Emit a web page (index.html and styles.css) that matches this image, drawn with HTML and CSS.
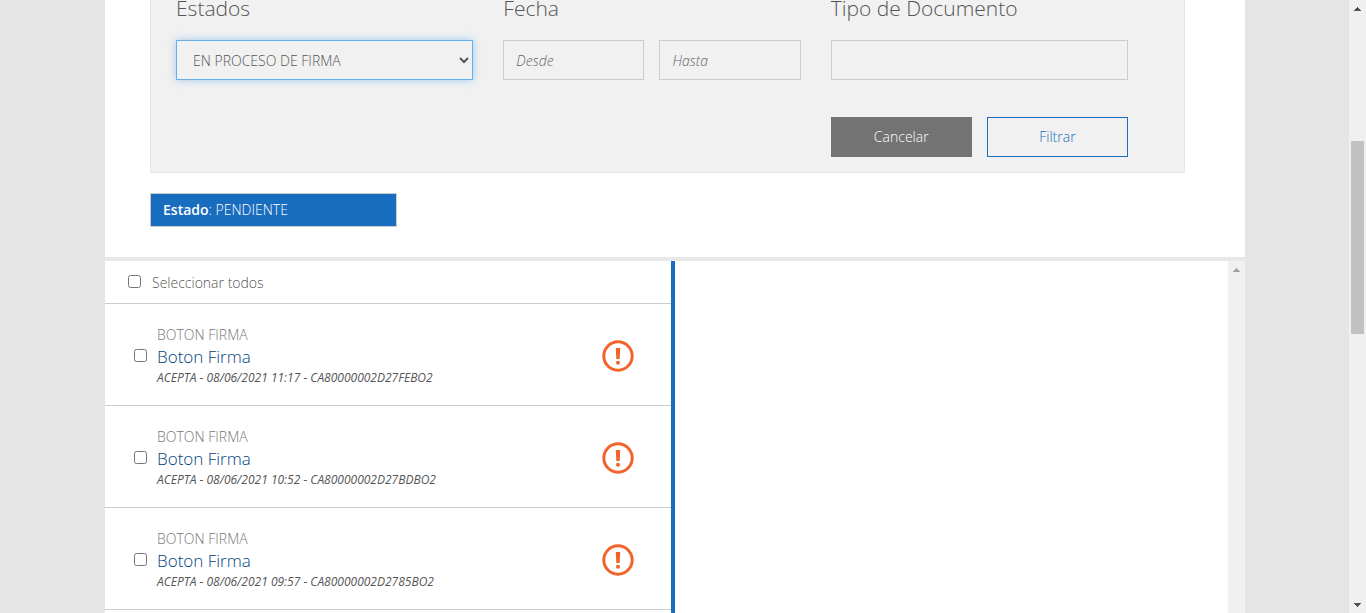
FILE: index.html
```html
<!DOCTYPE html>
<html lang="es">
<head>
<meta charset="utf-8">
<meta name="viewport" content="width=device-width, initial-scale=1">
<title>Documentos</title>
<link rel="stylesheet" href="styles.css">
</head>
<body>
<div class="page">
  <main class="content">
    <section class="top">
      <form class="filters">
        <div class="field">
          <label class="field-title" for="estado">Estados</label>
          <select class="control select" id="estado"><option>EN PROCESO DE FIRMA</option></select>
        </div>
        <div class="field">
          <label class="field-title" for="desde">Fecha</label>
          <div class="pair">
            <input class="control" id="desde" type="text" placeholder="Desde">
            <input class="control" type="text" placeholder="Hasta" aria-label="Hasta">
          </div>
        </div>
        <div class="field">
          <label class="field-title" for="tipo">Tipo de Documento</label>
          <input class="control" id="tipo" type="text">
        </div>
        <div class="pair actions">
          <button class="button button-cancel" type="button">Cancelar</button>
          <button class="button button-filter" type="button">Filtrar</button>
        </div>
      </form>
      <div class="status"><strong>Estado</strong>: PENDIENTE</div>
    </section>
    <section class="documents">
      <div class="list">
        <label class="select-all"><input class="check" type="checkbox"><span>Seleccionar todos</span></label>
        <article class="item">
          <input class="check" type="checkbox" id="doc1">
          <label class="info" for="doc1"><span class="kind">BOTON FIRMA</span><span class="name">Boton Firma</span><span class="meta">ACEPTA - 08/06/2021 11:17 - CA80000002D27FEBO2</span></label>
          <svg class="alert" viewBox="0 0 32 32" aria-hidden="true"><circle cx="16" cy="16" r="14.2"/><path d="M13.8 8h4.4l-.5 11h-3.4z"/><circle class="dot" cx="16" cy="22.8" r="2"/></svg>
        </article>
        <article class="item">
          <input class="check" type="checkbox" id="doc2">
          <label class="info" for="doc2"><span class="kind">BOTON FIRMA</span><span class="name">Boton Firma</span><span class="meta">ACEPTA - 08/06/2021 10:52 - CA80000002D27BDBO2</span></label>
          <svg class="alert" viewBox="0 0 32 32" aria-hidden="true"><circle cx="16" cy="16" r="14.2"/><path d="M13.8 8h4.4l-.5 11h-3.4z"/><circle class="dot" cx="16" cy="22.8" r="2"/></svg>
        </article>
        <article class="item">
          <input class="check" type="checkbox" id="doc3">
          <label class="info" for="doc3"><span class="kind">BOTON FIRMA</span><span class="name">Boton Firma</span><span class="meta">ACEPTA - 08/06/2021 09:57 - CA80000002D2785BO2</span></label>
          <svg class="alert" viewBox="0 0 32 32" aria-hidden="true"><circle cx="16" cy="16" r="14.2"/><path d="M13.8 8h4.4l-.5 11h-3.4z"/><circle class="dot" cx="16" cy="22.8" r="2"/></svg>
        </article>
      </div>
      <div class="preview"></div>
      <div class="scrollbar scrollbar-disabled" aria-hidden="true">
        <svg class="arrow" viewBox="0 0 7 4" shape-rendering="crispEdges"><path d="M3 0h1v1h1v1h1v1h1v1H0V3h1V2h1V1h1z"/></svg>
      </div>
    </section>
  </main>
</div>
<div class="scrollbar" aria-hidden="true">
  <svg class="arrow" viewBox="0 0 7 4" shape-rendering="crispEdges"><path d="M3 0h1v1h1v1h1v1h1v1H0V3h1V2h1V1h1z"/></svg>
  <div class="track"><div class="thumb"></div></div>
  <svg class="arrow" viewBox="0 0 7 4" shape-rendering="crispEdges"><path d="M0 0h7v1H6v1H5v1H4v1H3V3H2V2H1V1H0z"/></svg>
</div>
</body>
</html>
```
FILE: styles.css
```css
* {
  box-sizing: border-box;
}

body {
  margin: 0;
  height: 100vh;
  display: flex;
  overflow: hidden;
  font: 300 14px/20px "Open Sans", sans-serif;
  color: #555;
  background: #e5e5e5;
}

.page {
  flex: 1;
  display: flex;
  padding: 0 104px 0 105px;
}

.content {
  flex: 1;
  display: flex;
  flex-direction: column;
  min-width: 0;
  background: #fff;
}

.top {
  padding: 0 60px 30px 45px;
  border-bottom: 4px solid #e8e8e8;
}

.filters {
  display: grid;
  grid-template-columns: repeat(3, minmax(0, 1fr));
  gap: 37px 30px;
  padding: 0 56px 15px 25px;
  background: #f1f1f1;
  border: 1px solid #e5e5e5;
  border-top: 0;
}

.field-title {
  display: block;
  margin-bottom: 24px;
  font-size: 21px;
  line-height: 16px;
}

.pair {
  display: grid;
  grid-template-columns: repeat(2, minmax(0, 1fr));
  gap: 15px;
}

.actions {
  grid-column: 3;
}

.control {
  display: block;
  width: 100%;
  height: 40px;
  padding: 0 12px;
  font: inherit;
  color: #555;
  background: #f1f1f1;
  border: 1px solid #ccc;
  border-radius: 0;
  outline: 0;
}

.control::placeholder {
  color: #666;
  font-style: italic;
}

.select {
  border-color: #66afe9;
  box-shadow: 0 0 8px rgba(102, 175, 233, 0.6);
}

.button {
  height: 40px;
  padding: 0;
  font: inherit;
  border: 1px solid;
}

.button-cancel {
  color: #fff;
  background: #737373;
  border-color: #737373;
}

.button-filter {
  color: #196dbf;
  background: transparent;
  border-color: #196dbf;
}

.status {
  width: 247px;
  margin-top: 20px;
  padding: 6px 12px;
  color: #fff;
  background: #196dbf;
  border: 1px solid #ccc;
}

.status strong {
  font-weight: 600;
}

.documents {
  flex: 1;
  display: flex;
  min-height: 0;
}

.list {
  flex: 1;
  overflow: hidden;
  border-right: 4px solid #196dbf;
}

.select-all {
  display: flex;
  align-items: baseline;
  gap: 11px;
  height: 43px;
  padding: 12px 0 0 23px;
  border-bottom: 1px solid #ccc;
}

.check {
  flex: none;
  width: 13px;
  height: 13px;
  margin: 0;
}

.item {
  display: flex;
  align-items: center;
  gap: 10px;
  height: 102px;
  padding: 2px 37px 0 29px;
  border-bottom: 1px solid #ccc;
}

.info {
  flex: 1;
  display: flex;
  flex-direction: column;
}

.kind {
  color: #777;
}

.name {
  font-size: 17px;
  line-height: 24px;
  color: #00437f;
}

.meta {
  font-size: 12px;
  line-height: 18px;
  font-style: italic;
  font-weight: 400;
}

.alert {
  width: 32px;
  height: 32px;
  fill: none;
  stroke: #f2622b;
  stroke-width: 3;
}

.alert path,
.alert .dot {
  fill: #f2622b;
  stroke: none;
}

.preview {
  flex: 0 0 553px;
}

.scrollbar {
  flex: none;
  display: flex;
  flex-direction: column;
  align-items: center;
  gap: 5px;
  width: 17px;
  padding: 7px 0 6px;
  background: #f0f0f0;
  fill: #505050;
}

.scrollbar-disabled {
  fill: #a3a3a3;
}

.arrow {
  flex: none;
  width: 7px;
  height: 4px;
}

.track {
  flex: 1;
  padding-top: 125px;
}

.thumb {
  width: 13px;
  height: 193px;
  background: #c1c1c1;
}
```
